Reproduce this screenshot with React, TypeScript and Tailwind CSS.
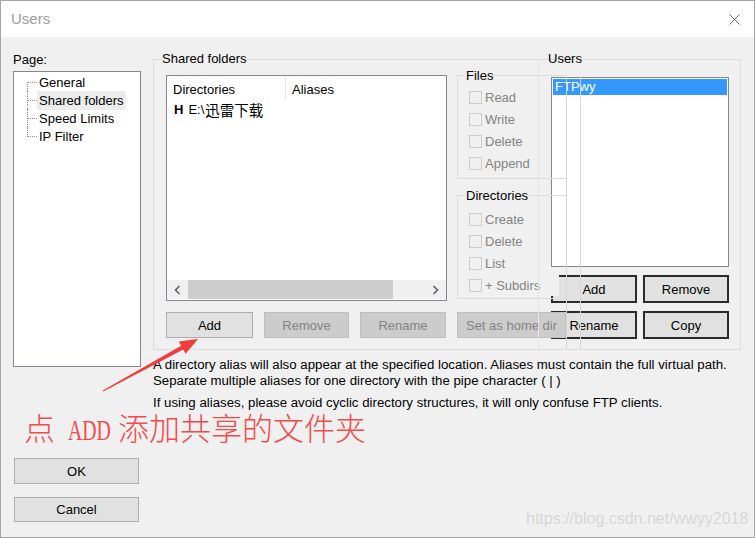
import React from "react";

function Chevron({ dir }: { dir: "left" | "right" }) {
  return (
    <svg width="7" height="10" viewBox="0 0 7 10">
      <path
        d={dir === "left" ? "M5.5 1 L1.5 5 L5.5 9" : "M1.5 1 L5.5 5 L1.5 9"}
        fill="none"
        stroke="#606060"
        strokeWidth="1.6"
      />
    </svg>
  );
}

function Check({ label, wide }: { label: string; wide?: boolean }) {
  return (
    <div className={`flex items-center h-[22px] pl-[2px] ${wide ? "w-[92px] bg-[#f0f0f0]" : ""}`}>
      <span className="w-[13px] h-[13px] border border-[#cccccc]" />
      <span className="ml-[3px] pt-px text-[#838383] whitespace-nowrap">{label}</span>
    </div>
  );
}

function TreeItem({ label, pos, selected }: { label: string; pos: "first" | "mid" | "last"; selected?: boolean }) {
  return (
    <div className="flex h-[18px] items-center pl-[13px]">
      <div className="relative w-[10px] self-stretch">
        <div
          className={`absolute left-0 border-l border-dotted border-[#8c8c8c] ${
            pos === "first" ? "top-[9px] bottom-0" : pos === "last" ? "top-0 h-[10px]" : "top-0 bottom-0"
          }`}
        />
        <div className="absolute left-[1px] right-0 top-[9px] border-t border-dotted border-[#8c8c8c]" />
      </div>
      <span className={`px-[2px] pt-px leading-[18px] whitespace-nowrap ${selected ? "bg-[#ececec]" : ""}`}>{label}</span>
    </div>
  );
}

const btn = "flex items-center justify-center border pt-px whitespace-nowrap";
const normalBtn = `${btn} bg-[#e1e1e1] border-[#adadad] text-black`;
const offBtn = `${btn} bg-[#cccccc] border-[#bfbfbf] text-[#838383]`;
const darkBtn = "flex items-center justify-center pt-px border-2 border-[#2b2b2b] bg-[#e1e1e1] text-black h-[28px] w-[86px] whitespace-nowrap";

export default function App() {
  return (
    <div className="relative w-[755px] h-[538px] overflow-hidden border border-[#a5a5a5] bg-[#f0f0f0] text-[13px] leading-[16px] text-black font-['Liberation_Sans','Noto_Sans_CJK_SC',sans-serif]">
      {/* title bar */}
      <div className="h-[36px] bg-white flex items-center justify-between pl-[10px] pr-[14px]">
        <span className="text-[15px] text-[#9d9d9d]">Users</span>
        <svg width="11" height="11" viewBox="0 0 11 11">
          <path d="M0.5 0.5 L10.5 10.5 M10.5 0.5 L0.5 10.5" stroke="#6b6b6b" strokeWidth="1" />
        </svg>
      </div>

      <div className="flex h-[500px]">
        {/* page tree + ok/cancel */}
        <div className="ml-[12px] w-[128px] flex flex-col">
          <div className="pt-[15px] h-[31px]">Page:</div>
          <div className="mt-[3px] h-[296px] border border-[#828790] bg-white pt-[1px]">
            <TreeItem label="General" pos="first" />
            <TreeItem label="Shared folders" pos="mid" selected />
            <TreeItem label="Speed Limits" pos="mid" />
            <TreeItem label="IP Filter" pos="last" />
          </div>
          <button className={`${normalBtn} mt-[91px] ml-[1px] w-[125px] h-[26px]`}>OK</button>
          <button className={`${normalBtn} mt-[13px] ml-[1px] w-[125px] h-[25px]`}>Cancel</button>
        </div>

        {/* shared folders page */}
        <div className="ml-[12px] flex flex-col">
          <div className="relative mt-[22px] w-[588px] h-[291px] border border-[#dcdcdc]">
            <span className="absolute left-[8px] -top-[9px] bg-[#f0f0f0] whitespace-nowrap">Shared folders</span>
            <span className="absolute left-[394px] -top-[9px] z-20">Users</span>

            <div className="flex items-start pl-[12px] pt-[15px]">
              {/* directories list */}
              <div className="w-[281px]">
                <div className="h-[226px] border border-[#828790] bg-white flex flex-col">
                  <div className="flex h-[24px]">
                    <div className="w-[119px] pl-[6px] pt-[6px] border-r border-[#e5e5e5]">Directories</div>
                    <div className="pl-[6px] pt-[6px]">Aliases</div>
                  </div>
                  <div className="flex items-center mt-[2px] pl-[7px] whitespace-nowrap">
                    <span className="font-bold">H</span>
                    <span className="ml-[5px] mr-px">E:\</span>
                    <span className="text-[14.5px] font-['Noto_Sans_CJK_SC',sans-serif]">迅雷下载</span>
                  </div>
                  <div className="flex-1" />
                  <div className="flex h-[19px] mb-px bg-[#f0f0f0]">
                    <div className="w-[21px] flex items-center justify-center">
                      <Chevron dir="left" />
                    </div>
                    <div className="w-[205px] bg-[#cdcdcd]" />
                    <div className="flex-1" />
                    <div className="w-[21px] flex items-center justify-center">
                      <Chevron dir="right" />
                    </div>
                  </div>
                </div>
                <div className="flex mt-[11px] gap-[11px]">
                  <button className={`${normalBtn} w-[87px] h-[26px]`}>Add</button>
                  <button className={`${offBtn} w-[85px] h-[26px]`}>Remove</button>
                  <button className={`${offBtn} w-[86px] h-[26px]`}>Rename</button>
                </div>
              </div>

              {/* permissions */}
              <div className="relative z-10 ml-[10px] w-[110px]">
                <div className="relative h-[104px] border border-[#dcdcdc] pt-[10px] pl-[9px]">
                  <span className="absolute left-[7px] -top-[8px] px-[1px] bg-[#f0f0f0]">Files</span>
                  <Check label="Read" />
                  <Check label="Write" />
                  <Check label="Delete" />
                  <Check label="Append" />
                </div>
                <div className="relative mt-[16px] h-[104px] border border-[#dcdcdc] pt-[12px] pl-[9px]">
                  <span className="absolute left-[7px] -top-[8px] px-[1px] bg-[#f0f0f0]">Directories</span>
                  <Check label="Create" />
                  <Check label="Delete" />
                  <Check label="List" />
                  <Check label="+ Subdirs" wide />
                </div>
                <button className={`${offBtn} mt-[13px] w-[109px] h-[26px]`}>Set as home dir</button>
              </div>

              {/* users */}
              <div className="ml-[-16px] mt-[2px] w-[178px]">
                <div className="h-[190px] border border-[#828790] bg-white p-px">
                  <div className="h-[16px] bg-[#3399ff] text-white pl-[2px] leading-[15px]">FTPwy</div>
                </div>
                <div className="flex justify-between mt-[8px]">
                  <button className={darkBtn}>Add</button>
                  <button className={darkBtn}>Remove</button>
                </div>
                <div className="flex justify-between mt-[8px]">
                  <button className={darkBtn}>Rename</button>
                  <button className={darkBtn}>Copy</button>
                </div>
              </div>
            </div>

            {/* stray redraw lines from the captured window */}
            <div className="absolute z-20 left-[384px] top-0 bottom-0 border-l border-[#e4e4e4]" />
            <div className="absolute z-20 left-[412px] top-[17px] bottom-0 border-l border-[#d6d6d6]" />
            <div className="absolute z-20 left-[426px] top-[17px] bottom-0 border-l border-[#d6d6d6]" />
          </div>

          <div className="mt-[7px] text-[13.25px] leading-[16px] whitespace-nowrap">
            <p>A directory alias will also appear at the specified location. Aliases must contain the full virtual path.</p>
            <p>Separate multiple aliases for one directory with the pipe character ( | )</p>
            <p className="mt-[6px]">If using aliases, please avoid cyclic directory structures, it will only confuse FTP clients.</p>
          </div>
        </div>
      </div>

      {/* annotation */}
      <svg className="absolute left-[95px] top-[330px]" width="110" height="65" viewBox="0 0 110 65">
        <polygon
          points="6.76,59.56 85.2,14.8 82.8,10.5 102,8 89.6,22.7 87.2,18.4 7.24,60.44"
          fill="#f03c3c"
        />
      </svg>
      <div className="absolute left-[23px] top-[412px] flex items-baseline text-[#f24b4b] whitespace-nowrap leading-[28px]">
        <span className="inline-block h-[28px] text-[31px] font-['Noto_Sans_CJK_SC',sans-serif] font-light">点</span>
        <span className="ml-[13px] inline-block w-[43px] h-[28px] text-[30px] font-['Liberation_Serif',serif]">
          <span className="inline-block origin-left scale-x-[0.66]">ADD</span>
        </span>
        <span className="ml-[7px] inline-block h-[28px] text-[31px] font-['Noto_Sans_CJK_SC',sans-serif] font-light">
          添加共享的文件夹
        </span>
      </div>

      <div className="absolute left-[525px] top-[510px] text-[16px] text-[#d4d4d4] [text-shadow:0_0_1px_#ffffff] whitespace-nowrap">
        https://blog.csdn.net/wwyy2018
      </div>
    </div>
  );
}
